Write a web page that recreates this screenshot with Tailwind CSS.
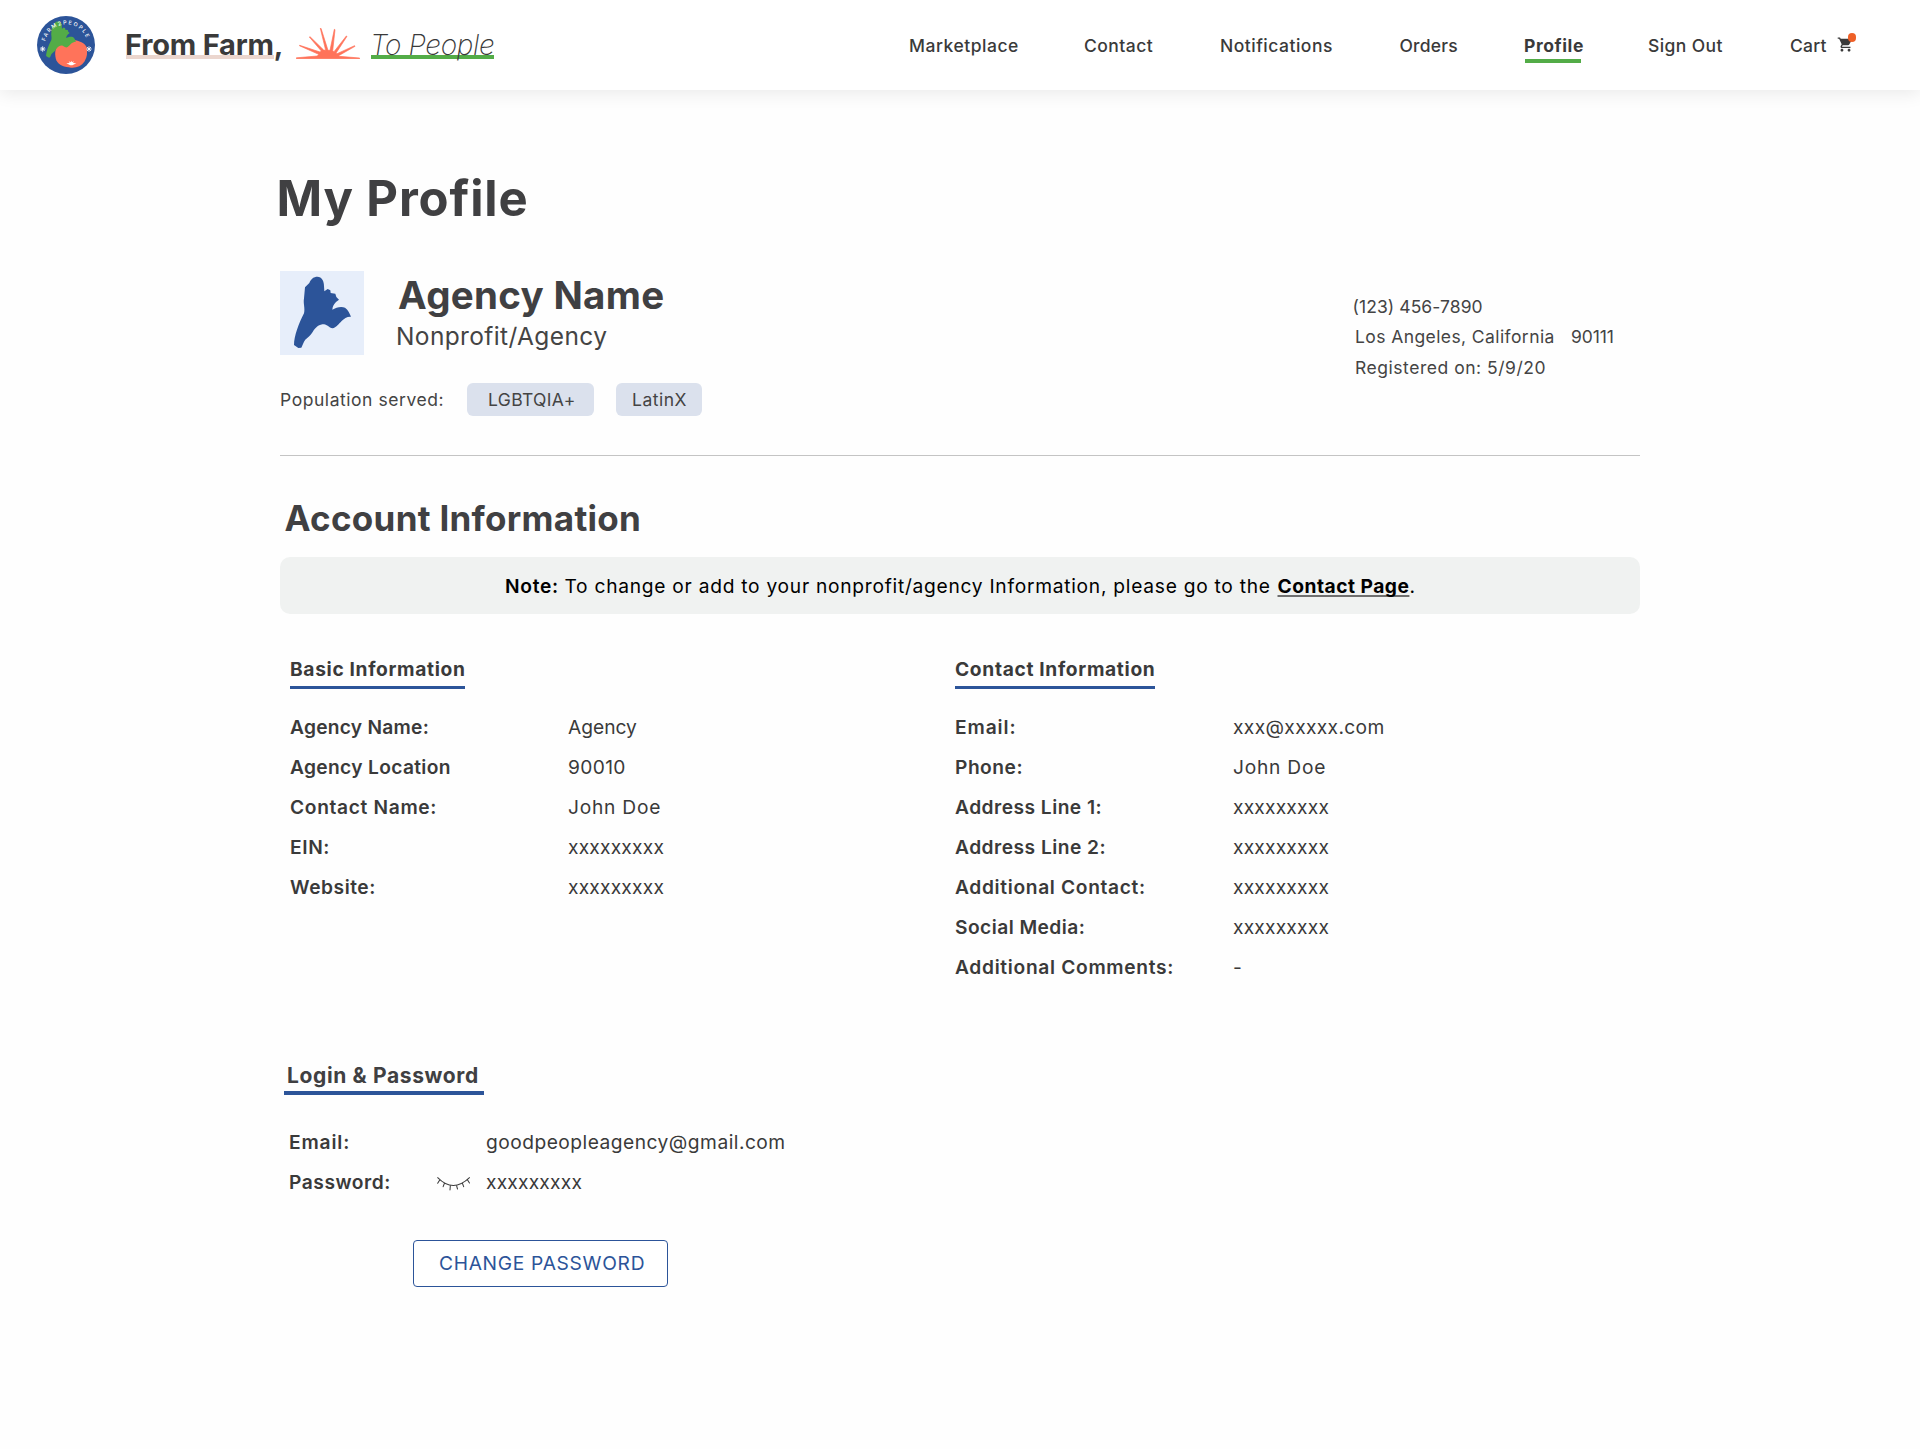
<!DOCTYPE html>
<html lang="en">
<head>
<meta charset="utf-8">
<title>My Profile</title>
<script src="https://cdn.jsdelivr.net/npm/@tailwindcss/browser@4"></script>
</head>
<body class="min-h-screen bg-[#fefefe] font-['Inter',sans-serif] text-[#3a3a3a]">

<header class="relative flex h-[90px] items-center bg-white pl-[37px] shadow-[0_4px_16px_rgba(0,0,0,0.08)]">
  <svg class="h-[58px] w-[58px] shrink-0" viewBox="51 47 174 174" aria-label="Farm2People">
    <defs>
      <path id="leaf" d="M172 380C186 380 192 394 192 408L193 424L203 417L211 421L212 429L226 431L229 441L237 449L228 456C220 464 218 470 217 479C228 472 244 468 255 473C264 478 269 490 273 500C262 499 252 505 245 513C236 522 228 533 218 535C206 533 202 524 192 523C178 523 168 530 158 546C148 562 138 564 132 575L124 593L115 594L102 585C102 560 116 520 132 490C136 476 129 460 132 445L135 412L148 399C153 386 162 380 172 380Z"/>
      <path id="arc" d="M76 123A64 64 0 0 1 201 121"/>
    </defs>
    <circle cx="138" cy="134" r="87" fill="#2c5499"/>
    <path fill="#ff735a" d="M160 118C176 121 196 128 200 141C203 158 201 170 194 183C184 198 170 203 153 202C134 200 116 196 109 180C104 166 104 148 112 138C118 132 140 122 160 118Z"/>
    <use href="#leaf" transform="translate(25 -130) scale(.523 .508)" fill="#53ac47"/>
    <text font-family="Inter, sans-serif" font-size="16" font-weight="500" fill="#fff"><textPath href="#arc" textLength="164">FARM2PEOPLE</textPath></text>
    <g stroke="#fff" stroke-width="2.6" stroke-linecap="round">
      <path d="M68 139V153M61 146H75M63 141L73 151M73 141L63 151"/>
      <path d="M207 139V153M200 146H214M202 141L212 151M212 141L202 151"/>
    </g>
    <path fill="#fff" d="M139 189L149 188L146 183L152 186L154 181L156 186L162 183L159 188L169 189L160 193Q154 197 148 193Z"/>
  </svg>

  <div class="ml-[30px] flex h-10 items-center leading-10">
    <div class="relative w-[171px] shrink-0 text-[29px]">
      <span class="absolute top-[30px] left-px h-1 w-[148px] bg-[#ebd6ce]"></span>
      <span class="relative font-bold tracking-[-0.2px]">From Farm,</span>
    </div>
    <svg class="-mt-[3px] h-[31px] w-16 shrink-0" viewBox="78 84 192 93" fill="#ff735a" stroke="#ff735a" stroke-width="2" stroke-linejoin="round">
      <path d="M79 176V173.500L142 168L146 163L88 137L89 136L150 156L154 153L118 111L120 110L161 150L167 151L151 85L153 85L174 151L180 151L193 88L195 89L188 153L192 155L229 108L231 109L199 158L201 161L254 137L255 139L206 167L208 169L269 174V176Z"/>
    </svg>
    <div class="relative ml-[11px] w-[123px] shrink-0 text-[28px]">
      <span class="absolute top-[30px] left-0 h-1 w-[123px] bg-[#53ac47]"></span>
      <span class="relative -ml-px font-extralight tracking-[-0.35px] whitespace-nowrap italic">To People</span>
    </div>
  </div>

  <nav class="ml-auto flex w-[1011px] shrink-0 pt-[2px] text-[17.5px] leading-6 font-medium whitespace-nowrap">
    <a class="w-[175px] tracking-[0.52px]">Marketplace</a>
    <a class="w-[136px] tracking-[0.45px]">Contact</a>
    <a class="w-[179.5px] tracking-[0.5px]">Notifications</a>
    <a class="w-[124.5px] tracking-[0.2px]">Orders</a>
    <a class="relative w-[124px] font-bold tracking-[0.6px]">Profile<span class="absolute top-[24.5px] left-px h-1 w-14 bg-[#53ac47]"></span></a>
    <a class="w-[142px] tracking-[0.4px]">Sign Out</a>
    <a class="flex tracking-[0.2px]">Cart
      <span class="relative ml-[10.5px] block h-6 w-4">
        <svg class="mt-[2px] h-[17px] w-[17px]" viewBox="0 0 24 24" fill="#3a3a3a"><path d="M7 18c-1.100 0-1.990.9-1.990 2S5.900 22 7 22s2-.9 2-2-.9-2-2-2zM1 2v2h2l3.600 7.590-1.350 2.450c-.16.28-.25.61-.25.96 0 1.100.9 2 2 2h12v-2H7.420c-.14 0-.25-.11-.25-.25l.03-.12.900-1.630h7.450c.75 0 1.410-.41 1.750-1.030l3.580-6.490A1 1 0 0 0 20 4H5.210l-.94-2H1zm16 16c-1.100 0-1.990.9-1.990 2s.89 2 1.990 2 2-.9 2-2-.9-2-2-2z"/></svg>
        <span class="absolute -top-px left-[10.5px] size-[8.5px] rounded-full bg-[#ee6028]"></span>
      </span>
    </a>
  </nav>
</header>

<main class="ml-[280px] w-[1360px] pt-[81.5px]">
  <h1 class="-ml-[3.5px] text-[49px] leading-[54px] font-bold tracking-[0.85px] text-[#404042]">My Profile</h1>

  <section class="mt-[45.5px] flex justify-between border-b border-[#c4c4c4] pb-[39px]">
    <div>
      <div class="flex">
        <svg class="size-[84px] bg-[#e7eefa]" viewBox="60 363 252 252" fill="#2c5499"><use href="#leaf"/></svg>
        <div class="ml-8 pt-[2px]">
          <h2 class="ml-0.5 text-[38.5px] leading-[44px] font-bold tracking-[0.3px] text-[#404042]">Agency Name</h2>
          <p class="mt-[3px] text-[24.5px] leading-8 tracking-[0.37px] text-[#444]">Nonprofit/Agency</p>
        </div>
      </div>
      <div class="mt-7 flex h-[33px] text-[17.5px] leading-[33px] text-[#444]">
        <span class="w-[187px] tracking-[0.55px]">Population served:</span>
        <span class="w-[127px] rounded-md bg-[#dbe1ed] pl-[21px] tracking-[0.35px]">LGBTQIA+</span>
        <span class="ml-[22px] w-[86px] rounded-md bg-[#dbe1ed] pl-4 tracking-[0.5px]">LatinX</span>
      </div>
    </div>
    <div class="w-[285px] pt-[20.5px] text-[17.5px] leading-[30.5px] whitespace-nowrap text-[#444]">
      <p class="-ml-[2.5px] tracking-[0.08px]">(123) 456-7890</p>
      <p class="flex"><span class="w-[216px] tracking-[0.41px]">Los Angeles, California</span><span class="tracking-[-0.1px]">90111</span></p>
      <p class="tracking-[0.53px]">Registered on: 5/9/20</p>
    </div>
  </section>

  <h2 class="mt-[42px] pl-[4.5px] text-[35px] leading-10 font-bold tracking-[0.28px] text-[#404042]">Account Information</h2>

  <p class="mt-[19px] flex h-[57px] items-center rounded-[10px] bg-[#f0f2f1] pt-px pl-[225px] text-[19.2px] whitespace-nowrap text-black">
    <b class="w-[59.5px] font-semibold tracking-[0.7px]">Note:</b>
    <span class="w-[713px] tracking-[0.73px]">To change or add to your nonprofit/agency Information, please go to the</span>
    <a class="font-bold tracking-[0.5px] underline decoration-[#6f6f6f] decoration-2 underline-offset-[2px] [text-decoration-skip-ink:none]">Contact Page</a><span>.</span>
  </p>

  <section class="mt-[42px] grid grid-cols-[665px_1fr] pl-[10px] text-[19.2px]">
    <div>
      <h3 class="w-[175px] border-b-3 border-[#2c5499] pb-1 leading-[26px] font-bold tracking-[0.65px] whitespace-nowrap">Basic Information</h3>
      <dl class="mt-[18px] grid grid-cols-[278px_1fr] leading-10">
        <dt class="font-semibold tracking-[0.25px]">Agency Name:</dt><dd class="tracking-[0px]">Agency</dd>
        <dt class="font-semibold tracking-[0.33px]">Agency Location</dt><dd class="tracking-[0.35px]">90010</dd>
        <dt class="font-semibold tracking-[0.66px]">Contact Name:</dt><dd class="tracking-[0.75px]">John Doe</dd>
        <dt class="font-semibold tracking-[0.6px]">EIN:</dt><dd class="tracking-[0.2px]">xxxxxxxxx</dd>
        <dt class="font-semibold tracking-[0.55px]">Website:</dt><dd class="tracking-[0.2px]">xxxxxxxxx</dd>
      </dl>
    </div>
    <div>
      <h3 class="w-[200px] border-b-3 border-[#2c5499] pb-1 leading-[26px] font-bold tracking-[0.66px] whitespace-nowrap">Contact Information</h3>
      <dl class="mt-[18px] grid grid-cols-[278px_1fr] leading-10">
        <dt class="font-semibold tracking-[0.9px]">Email:</dt><dd class="tracking-[0.34px]">xxx@xxxxx.com</dd>
        <dt class="font-semibold tracking-[0.5px]">Phone:</dt><dd class="tracking-[0.75px]">John Doe</dd>
        <dt class="font-semibold tracking-[0.47px]">Address Line 1:</dt><dd class="tracking-[0.2px]">xxxxxxxxx</dd>
        <dt class="font-semibold tracking-[0.48px]">Address Line 2:</dt><dd class="tracking-[0.2px]">xxxxxxxxx</dd>
        <dt class="font-semibold tracking-[0.66px]">Additional Contact:</dt><dd class="tracking-[0.2px]">xxxxxxxxx</dd>
        <dt class="font-semibold tracking-[0.45px]">Social Media:</dt><dd class="tracking-[0.2px]">xxxxxxxxx</dd>
        <dt class="font-semibold tracking-[0.68px]">Additional Comments:</dt><dd>-</dd>
      </dl>
    </div>
  </section>

  <section class="mt-[74.5px] pl-1 text-[19.2px]">
    <h3 class="w-[200px] border-b-4 border-[#2c5499] pb-[1.5px] pl-[3px] text-[21px] leading-7 font-bold tracking-[0.64px] whitespace-nowrap text-[#404042]">Login &amp; Password</h3>
    <dl class="mt-[27px] grid grid-cols-[148px_49px_1fr] pl-[5px] leading-10">
      <dt class="font-semibold tracking-[0.85px]">Email:</dt><dd></dd><dd class="tracking-[0.48px]">goodpeopleagency@gmail.com</dd>
      <dt class="font-semibold tracking-[0.55px]">Password:</dt>
      <dd class="flex items-center pt-[3px]">
        <svg class="h-[14px] w-[33.5px]" viewBox="484 382 98 42" preserveAspectRatio="none" fill="none" stroke="#3a3a3a" stroke-width="3" stroke-linecap="round"><path d="M486 384Q531 431 579 384M492 391L486 401M506 400L502 411M523 408L522 421M541 407L544 418M558 400L562 411M573 390L579 400"/></svg>
      </dd>
      <dd class="tracking-[0.2px]">xxxxxxxxx</dd>
    </dl>
    <button class="mt-[37.5px] ml-[129px] flex h-[47px] w-[255px] items-center rounded border border-[#2c5499] bg-white pl-[25px] text-[19.2px] tracking-[0.7px] whitespace-nowrap text-[#2c5499]">CHANGE PASSWORD</button>
  </section>
</main>
</body>
</html>
